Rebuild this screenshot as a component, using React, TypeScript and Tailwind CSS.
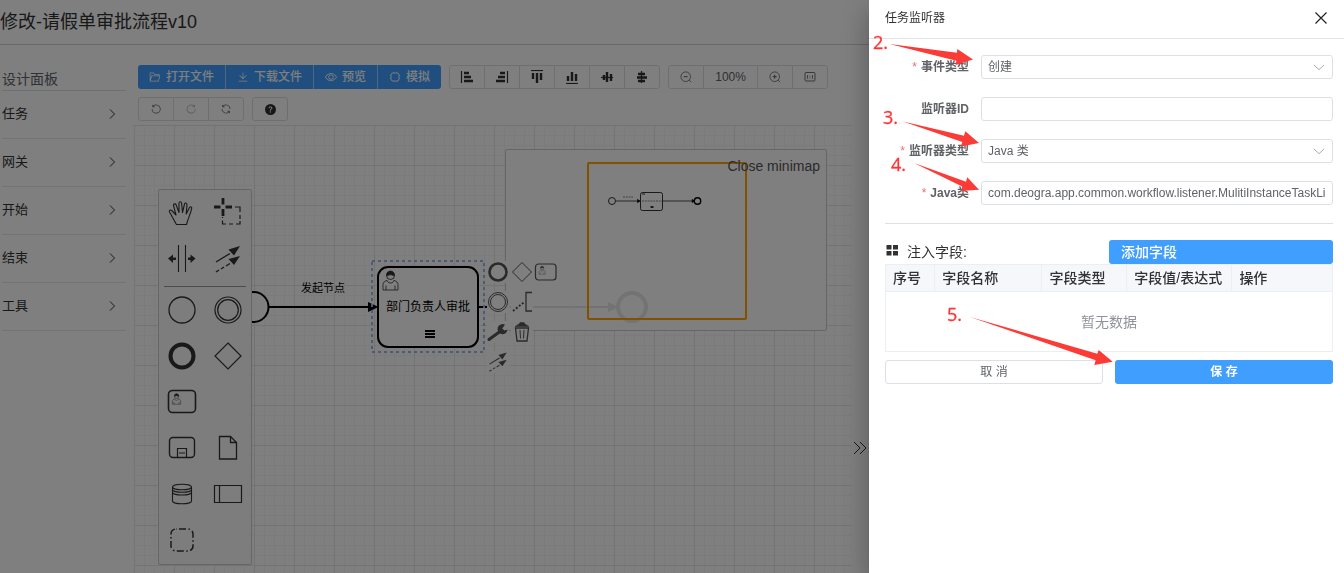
import React from 'react';
import { BsQuestionCircleFill } from 'react-icons/bs';

type IconProps = { className?: string };

const Glyph = ({ d, className = 'size-3' }: { d: string; className?: string }) => (
  <svg viewBox="0 0 1024 1024" fill="currentColor" aria-hidden="true" className={className}>
    <path d={d} />
  </svg>
);

const FOLDER =
  'M878.08 448H241.92l-96 384h636.16l96-384zM832 384v-64H485.76L357.504 192H128v448l57.92-231.744A32 32 0 0 1 216.96 384H832zm-24.96 512H96a32 32 0 0 1-32-32V160a32 32 0 0 1 32-32h287.872l128.384 128H864a32 32 0 0 1 32 32v96h23.04a32 32 0 0 1 31.04 39.744l-112 448A32 32 0 0 1 807.04 896z';
const DOWNLOAD =
  'M160 832h704a32 32 0 1 1 0 64H160a32 32 0 1 1 0-64zm384-253.696 236.288-236.352 45.248 45.248L508.8 704 192 387.2l45.248-45.248L480 584.704V128h64v450.304z';
const VIEW =
  'M512 160c320 0 512 352 512 352S832 864 512 864 0 512 0 512s192-352 512-352zm0 64c-225.28 0-384.128 208.064-436.8 288 52.608 79.872 211.456 288 436.8 288 225.28 0 384.128-208.064 436.8-288-52.608-79.872-211.456-288-436.8-288zm0 64a224 224 0 1 1 0 448 224 224 0 0 1 0-448zm0 64a160.192 160.192 0 0 0-160 160c0 88.192 71.744 160 160 160s160-71.808 160-160-71.744-160-160-160z';
const UNDO =
  'M289.088 296.704h92.992a32 32 0 0 1 0 64H232.96a32 32 0 0 1-32-32V179.712a32 32 0 0 1 64 0v50.56a384 384 0 0 1 643.84 282.88 384 384 0 0 1-383.936 384 384 384 0 0 1-384-384h64a320 320 0 1 0 640 0 320 320 0 0 0-555.712-216.448z';
const REDO =
  'M784.512 230.272v-50.56a32 32 0 1 1 64 0v149.056a32 32 0 0 1-32 32H667.52a32 32 0 1 1 0-64h92.992A320 320 0 1 0 524.8 833.152a320 320 0 0 0 320-320h64a384 384 0 0 1-384 384 384 384 0 0 1-384-384 384 384 0 0 1 643.712-282.88z';
const REFRESH =
  'M771.776 794.88A384 384 0 0 1 128 512h64a320 320 0 0 0 555.712 216.448H654.72a32 32 0 1 1 0-64h149.056a32 32 0 0 1 32 32v148.928a32 32 0 1 1-64 0v-50.56zM276.288 295.616h92.992a32 32 0 0 1 0 64H220.16a32 32 0 0 1-32-32V178.56a32 32 0 0 1 64 0v50.56A384 384 0 0 1 896.128 512h-64a320 320 0 0 0-555.776-216.384z';

const ChipIcon = () => (
  <svg viewBox="0 0 12 12" fill="none" stroke="currentColor" strokeWidth="0.9" aria-hidden="true" className="size-3">
    <rect x="2" y="2" width="8" height="8" rx="2" />
    <path d="M4.5 2V.8M7.5 2V.8M4.5 11.2V10M7.5 11.2V10M2 4.5H.8M2 7.5H.8M11.2 4.5H10M11.2 7.5H10" strokeWidth="0.6" />
  </svg>
);

const ChevronRight = ({ className = 'size-3' }: IconProps) => (
  <svg viewBox="0 0 12 12" fill="none" stroke="currentColor" aria-hidden="true" className={className}>
    <path d="M4 1.5 8.5 6 4 10.5" />
  </svg>
);

const ChevronDown = ({ className }: IconProps) => (
  <svg viewBox="0 0 12 12" fill="none" stroke="currentColor" aria-hidden="true" className={className}>
    <path d="M1 4 6 8.7 11 4" />
  </svg>
);

const ZoomIcon = ({ plus }: { plus?: boolean }) => (
  <svg viewBox="0 0 12 12" fill="none" stroke="currentColor" strokeWidth="0.8" aria-hidden="true" className="size-3">
    <circle cx="5.7" cy="5.7" r="4.8" />
    <path d="M9.2 9.2l2 2" />
    <path d="M3.7 5.7h4" strokeWidth="1" />
    {plus && <path d="M5.7 3.7v4" strokeWidth="1" />}
  </svg>
);

const FitIcon = () => (
  <svg viewBox="0 0 12 12" fill="none" stroke="currentColor" strokeWidth="0.9" aria-hidden="true" className="size-3">
    <rect x="1" y="1.5" width="10" height="8.5" rx="1" />
    <path d="M3.5 4v3.8M8.5 4v3.8M6 4.8v.8M6 6.6v.8" strokeWidth="0.8" />
  </svg>
);

const AlignIcon = ({ d, line }: { d: string; line: string }) => (
  <svg viewBox="0 0 14 14" fill="none" stroke="#303133" aria-hidden="true" className="size-3.5">
    <path d={d} strokeWidth="2.4" />
    <path d={line} strokeWidth="1.2" />
  </svg>
);

const ALIGNS = [
  { label: '向左对齐', d: 'M4 3h5M4 7h7M4 11h9', line: 'M1.5 1v12' },
  { label: '向右对齐', d: 'M5 3h5M3 7h7M1 11h9', line: 'M12.5 1v12' },
  { label: '向上对齐', d: 'M3 3v6M7 3v10M11 3v7', line: 'M1 .5h12' },
  { label: '向下对齐', d: 'M3 11V6M7 11V2M11 11V4', line: 'M1 13.5h12' },
  { label: '水平居中', d: 'M4 5v5M7 2v10M11 4v7', line: 'M1 7.5h12' },
  { label: '垂直居中', d: 'M3 4h7M2 7.5h10M3 11h7', line: 'M6.5 1v12' },
];

const primary =
  'flex h-6 items-center gap-[5px] border-r border-[#9fceff] bg-[#409eff] px-[11px] text-xs font-medium text-white first:rounded-l-[3px] last:rounded-r-[3px] last:border-r-0';
const plain =
  'flex h-6 min-w-9 items-center justify-center border border-[#dcdfe6] px-2.5 text-xs text-[#606266] not-first:-ml-px first:rounded-l-[3px] last:rounded-r-[3px]';

function Toolbar() {
  return (
    <div className="flex flex-col gap-2 px-1 pt-5 pb-1">
      <div className="flex gap-2">
        <div className="flex">
          <button className={primary}><Glyph d={FOLDER} />打开文件</button>
          <button className={primary}><Glyph d={DOWNLOAD} />下载文件</button>
          <button className={primary}><Glyph d={VIEW} />预览</button>
          <button className={primary}><ChipIcon />模拟</button>
        </div>
        <div className="flex">
          {ALIGNS.map((a) => (
            <button key={a.label} aria-label={a.label} className={plain}>
              <AlignIcon d={a.d} line={a.line} />
            </button>
          ))}
        </div>
        <div className="flex">
          <button aria-label="缩小" className={plain}><ZoomIcon /></button>
          <button className={plain + ' w-[55px]'}>100%</button>
          <button aria-label="放大" className={plain}><ZoomIcon plus /></button>
          <button aria-label="重置" className={plain}><FitIcon /></button>
        </div>
      </div>
      <div className="flex gap-2">
        <div className="flex">
          <button aria-label="撤销" className={plain}><Glyph d={UNDO} /></button>
          <button aria-label="恢复" className={plain}><Glyph d={REDO} className="size-3 opacity-50" /></button>
          <button aria-label="重新绘制" className={plain}><Glyph d={REFRESH} /></button>
        </div>
        <div className="flex">
          <button aria-label="帮助" className={plain}><BsQuestionCircleFill className="size-[11px] text-[#303133]" /></button>
        </div>
      </div>
    </div>
  );
}

const person = (
  <g fill="none" stroke="currentColor">
    <path d="M3.5 19.5V14c0-2 1.500-3.200 4-4.200 0 1.200 1.500 2.700 3.500 2.700s3.500-1.500 3.500-2.700c2.500 1 4 2.200 4 4.200v5.500zM6.500 15v4.500M15.500 15v4.500" strokeWidth="0.8" />
    <circle cx="11" cy="5" r="4" strokeWidth="0.9" />
    <path d="M7 5c0-2.600 1.700-4.500 4-4.500s4 1.900 4 4.500c-1.500.4-2.600-.7-4-.7S8.500 5.400 7 5z" fill="currentColor" strokeWidth="0.6" />
  </g>
);

const arrows = (
  <g>
    <path d="M2 14 16 5.500M2 24l3-2M7 21l3-2M12 18l4-2.500" fill="none" stroke="currentColor" strokeWidth="1.4" />
    <path d="M26-2 20 7.500 14.500 1.500zM26 8l-6 9-5.500-6z" fill="currentColor" />
  </g>
);

const PALETTE: { label: string; art: React.ReactNode }[] = [
  {
    label: '手型工具',
    art: (
      <path d="M9.500 26.500c-2-3-4-7.500-7-12.500-.7-1.600.9-2.600 2.200-1.500l4.300 4.500L6.500 7.500c-.3-1.800 1.900-2.300 2.600-.7L12 14.500V5c.1-1.700 2.400-1.700 2.600 0l.9 9.500 2-8.500c.5-1.500 2.600-1.200 2.500.5l-.8 9.500 3.300-6.500c.9-1.300 2.600-.6 2.200.9-1 5-3.500 9.500-5.200 16.100z" fill="none" stroke="currentColor" strokeWidth="1.100" strokeLinejoin="round" />
    ),
  },
  {
    label: '框选工具',
    art: (
      <g fill="none" stroke="currentColor">
        <path d="M10 0v6.500M10 11v7M1 9h6.500M12.500 9H19" strokeWidth="2.800" />
        <path d="M22 9h5v5M27 17v4M27 23v3h-4M20 26h-4M13 26H9.500v-3.500M9.500 20v-1" strokeWidth="1.200" />
      </g>
    ),
  },
  {
    label: '空间工具',
    art: (
      <g>
        <path d="M11.500 1v27M18.500 1v27" stroke="currentColor" strokeWidth="1.100" />
        <path d="M1 14.500 6 10.500v3h3v2.500H6v3zM28.500 14.500l-5-4v3h-2.500v2.500h2.500v3z" fill="currentColor" />
      </g>
    ),
  },
  { label: '连接工具', art: <g transform="translate(1,4)">{arrows}</g> },
  { label: '开始事件', art: <circle cx="15" cy="15" r="13" fill="none" stroke="currentColor" strokeWidth="1.300" /> },
  {
    label: '中间事件',
    art: (
      <g fill="none" stroke="currentColor" strokeWidth="1.200">
        <circle cx="15" cy="15" r="13" />
        <circle cx="15" cy="15" r="10.300" />
      </g>
    ),
  },
  { label: '结束事件', art: <circle cx="15" cy="15" r="11.500" fill="none" stroke="currentColor" strokeWidth="4" /> },
  { label: '网关', art: <path d="M15 2 28 15 15 28 2 15z" fill="none" stroke="currentColor" strokeWidth="1.200" /> },
  {
    label: '用户任务',
    art: (
      <g>
        <rect x="1.500" y="3.500" width="27" height="22" rx="4" fill="none" stroke="currentColor" strokeWidth="1.600" />
        <g transform="translate(3.500,6.500) scale(.55)">{person}</g>
      </g>
    ),
  },
  { label: '', art: null },
  {
    label: '子流程',
    art: (
      <g fill="none" stroke="currentColor" strokeWidth="1.200">
        <rect x="2.500" y="4.500" width="25" height="20" rx="3.500" strokeWidth="1.400" />
        <path d="M10.500 24.500v-9h9v9M12 20h6" />
      </g>
    ),
  },
  { label: '数据对象', art: <path d="M6.500 3.500h11l6 6V26h-17zM17.500 3.500v6h6" fill="none" stroke="currentColor" strokeWidth="1.300" /> },
  {
    label: '数据存储',
    art: (
      <g fill="none" stroke="currentColor" strokeWidth="1.100">
        <ellipse cx="15" cy="8" rx="9.500" ry="2.800" />
        <path d="M5.500 8v14c0 1.600 4.300 2.800 9.500 2.800s9.500-1.200 9.500-2.800V8M5.500 10.500c0 1.600 4.300 2.800 9.500 2.800s9.500-1.200 9.500-2.800M5.500 13.200c0 1.600 4.300 2.800 9.500 2.800s9.500-1.200 9.500-2.800" />
      </g>
    ),
  },
  { label: '泳池', art: <path d="M1.500 6.500h27v17h-27zM6.500 6.500v17" fill="none" stroke="currentColor" strokeWidth="1.200" /> },
  {
    label: '分组',
    art: (
      <rect x="4" y="4" width="22" height="22" rx="5" fill="none" stroke="currentColor" strokeWidth="1.500" strokeDasharray="7 2.500 1.500 2.500" strokeDashoffset="-3" />
    ),
  },
];

function PaletteGroup({ items }: { items: typeof PALETTE }) {
  return (
    <div className="grid grid-cols-[46px_46px]">
      {items.map((item, i) =>
        item.label ? (
          <button key={item.label} aria-label={item.label} className="flex h-[46px] items-center justify-center">
            <svg viewBox="0 0 30 30" className="size-[30px] overflow-visible">{item.art}</svg>
          </button>
        ) : (
          <span key={i} />
        )
      )}
    </div>
  );
}

const PAD: { label: string; x: number; y: number; art: React.ReactNode }[] = [
  { label: '追加结束事件', x: 488, y: 262, art: <circle cx="10" cy="10" r="8.500" fill="none" stroke="currentColor" strokeWidth="2.600" /> },
  { label: '追加网关', x: 512, y: 262, art: <path d="M10 .5 19.500 10 10 19.500.5 10z" fill="none" stroke="currentColor" /> },
  {
    label: '追加用户任务',
    x: 536,
    y: 262,
    art: (
      <g>
        <rect x="-.5" y="2" width="20.500" height="16" rx="3" fill="none" stroke="currentColor" strokeWidth="1.200" />
        <g transform="translate(1.500,4) scale(.42)">{person}</g>
      </g>
    ),
  },
  {
    label: '追加中间事件',
    x: 488,
    y: 292,
    art: (
      <g fill="none" stroke="currentColor">
        <circle cx="10" cy="10" r="9.500" />
        <circle cx="10" cy="10" r="7.500" />
      </g>
    ),
  },
  {
    label: '添加注释',
    x: 512,
    y: 292,
    art: (
      <g fill="none" stroke="currentColor">
        <path d="M20 .5h-6v18.500h6" strokeWidth="1.300" />
        <path d="M1 19 13 9.500" strokeWidth="2" strokeDasharray="2 1.800" />
      </g>
    ),
  },
  {
    label: '更改类型',
    x: 488,
    y: 322,
    art: (
      <g>
        <path d="M1 17.500 12 9.500" stroke="currentColor" strokeWidth="3" strokeLinecap="round" />
        <path d="M17 2.800a5 5 0 1 0 2.500 4.700l-3 1-2.300-2z" fill="currentColor" />
      </g>
    ),
  },
  {
    label: '删除',
    x: 512,
    y: 322,
    art: (
      <g fill="none" stroke="currentColor">
        <path d="M3.500 6h13l-1.500 13H5z" strokeWidth="1.300" />
        <path d="M8 8l.5 8.500M12 8l-.5 8.500" />
        <path d="M3 4.500 7 2l1-1.500h4L13 2l4 2.500z" fill="currentColor" strokeWidth=".5" />
      </g>
    ),
  },
  { label: '连接', x: 488, y: 352, art: <g transform="translate(0,2) scale(.72)">{arrows}</g> },
];

function Canvas() {
  return (
    <div className="relative min-h-0 flex-1 overflow-hidden">
      <svg className="absolute inset-0 size-full">
        <defs>
          <pattern id="minor" width="10" height="10" patternUnits="userSpaceOnUse">
            <path d="M.5 0v10M0 .5h10" stroke="#f6f6f6" fill="none" />
          </pattern>
          <pattern id="major" width="40" height="40" patternUnits="userSpaceOnUse">
            <rect width="40" height="40" fill="url(#minor)" />
            <path d="M.5 0v40M0 .5h40" stroke="#e6e6e6" fill="none" />
          </pattern>
        </defs>
        <rect width="100%" height="100%" fill="url(#major)" />
        <g transform="translate(-134,-125)" stroke="#000" strokeWidth="2" fill="none">
          <circle cx="253.500" cy="307" r="15" fill="#fff" />
          <path d="M269 307h100M479 307h130" />
          <path d="M368 302l10.500 5-10.500 5zM608 302l10.500 5-10.500 5z" fill="#000" stroke="none" />
          <circle cx="632" cy="307" r="14" strokeWidth="4" />
          <rect x="378" y="267" width="100" height="80" rx="10" fill="#fff" />
          <g transform="translate(379.500,270.500)" strokeWidth="1">{person}</g>
          <path d="M425 331h10M425 334h10M425 337h10" />
          <rect x="372" y="261" width="112" height="91" stroke="#98b8f0" strokeDasharray="3 3" />
          <g fill="#000" stroke="none" textAnchor="middle" className="font-['Noto_Sans_CJK_SC',sans-serif]">
            <text x="323" y="292" fontSize="11">发起节点</text>
            <text x="428" y="311" fontSize="12">部门负责人审批</text>
          </g>
        </g>
      </svg>

      <div className="absolute top-6 right-6 h-[182px] w-[322px] rounded-xs border border-[#ccc] bg-white/90">
        <svg viewBox="506 150 320 180" className="size-full" fill="none" stroke="#000">
          <circle cx="612" cy="201" r="3.500" strokeWidth=".8" />
          <path d="M616 201h24M663 201h31" strokeWidth=".7" />
          <path d="M637.500 199.300 640 201l-2.500 1.700zM692 199.300l2.500 1.700-2.500 1.700z" fill="#000" strokeWidth=".5" />
          <rect x="640.500" y="192.500" width="22" height="18" rx="2" strokeWidth=".8" />
          <path d="M642 194h3M650.500 207.500h3M650.500 206.500h3" strokeWidth=".8" />
          <path d="M642 201h20M623 197h10" stroke="#888" strokeDasharray="2 .8" strokeWidth="1.200" />
          <circle cx="697.500" cy="201" r="3.200" strokeWidth="1.400" />
          <rect x="588" y="163" width="158" height="156" rx="1" stroke="#ffa500" strokeWidth="2" />
        </svg>
        <button className="absolute top-1.5 right-1.5 text-sm text-[#555]">Close minimap</button>
      </div>

      <div className="absolute top-16 left-6 w-[94px] rounded-xs border border-[#ccc] bg-[#fafafa] pb-px text-[#333]">
        <PaletteGroup items={PALETTE.slice(0, 4)} />
        <hr className="mx-[5px] mt-1 border-[#999]" />
        <PaletteGroup items={PALETTE.slice(4)} />
      </div>

      {PAD.map((p) => (
        <button
          key={p.label}
          aria-label={p.label}
          style={{ left: p.x - 135, top: p.y - 126 }}
          className="absolute flex size-[22px] items-center justify-center bg-white text-[#555]"
        >
          <svg viewBox="0 0 20 20" className="size-5 overflow-visible">{p.art}</svg>
        </button>
      ))}
    </div>
  );
}

const input =
  "h-6 w-full min-w-0 appearance-none rounded-[3px] border border-[#dcdfe6] bg-white px-1.5 text-xs text-[#606266]";

function Field({ id, label, required, children }: { id: string; label: string; required?: boolean; children: React.ReactNode }) {
  return (
    <div className="grid grid-cols-[84px_1fr] items-center gap-3">
      <label htmlFor={id} className="text-right text-xs font-bold whitespace-nowrap text-[#606266]">
        {required && <span className="mr-1 font-normal text-[#f56c6c]">*</span>}
        {label}
      </label>
      <div className="relative flex">{children}</div>
    </div>
  );
}

const th = 'border border-[#ebeef5] px-[7px] py-0 leading-[26px] font-medium';

function Drawer() {
  return (
    <section
      role="dialog"
      aria-label="任务监听器"
      className="fixed inset-y-0 right-0 flex w-[475px] max-w-full flex-col bg-white shadow-[0_8px_10px_-5px_rgba(0,0,0,.2),0_16px_24px_2px_rgba(0,0,0,.14),0_6px_30px_5px_rgba(0,0,0,.12)]"
    >
      <header className="flex h-[39px] items-center justify-between border-b border-[#e4e4e4] px-4 pb-0.5">
        <h2 className="text-xs text-[#303133]">任务监听器</h2>
        <button aria-label="关闭" className="text-[#222]">
          <svg viewBox="0 0 14 14" fill="none" stroke="currentColor" strokeWidth="1.200" className="size-3.5">
            <path d="M1.500 1.500l11 11M12.500 1.500l-11 11" />
          </svg>
        </button>
      </header>
      <form className="flex flex-col pt-4 pr-[11px] pl-4" onSubmit={(e) => e.preventDefault()}>
        <div className="flex flex-col gap-[18px]">
          <Field id="event" label="事件类型" required>
            <select id="event" className={input}>
              <option>创建</option>
            </select>
            <ChevronDown className="pointer-events-none absolute top-1.5 right-2 size-3 text-[#a8abb2]" />
          </Field>
          <Field id="listener-id" label="监听器ID">
            <input id="listener-id" className={input} />
          </Field>
          <Field id="listener-type" label="监听器类型" required>
            <select id="listener-type" className={input}>
              <option>Java 类</option>
            </select>
            <ChevronDown className="pointer-events-none absolute top-1.5 right-2 size-3 text-[#a8abb2]" />
          </Field>
          <Field id="java-class" label="Java类" required>
            <input id="java-class" className={input} defaultValue="com.deogra.app.common.workflow.listener.MulitiInstanceTaskListener" />
          </Field>
        </div>
        <hr className="mt-[18px] mb-4 border-[#dcdfe6]" />
        <div className="grid grid-cols-2">
          <div className="flex h-6 items-center gap-2 text-sm text-[#303133]">
            <svg viewBox="0 0 14 14" fill="#303133" aria-hidden="true" className="mb-1 size-3.5">
              <path d="M1.500 2h5v4.500h-5zM8 2h5v4.500H8zM1.500 8h5v4.500h-5zM8 8h5v4.500H8z" />
            </svg>
            注入字段:
          </div>
          <button className="h-6 rounded-[3px] bg-[#409eff] px-3 text-left text-sm leading-6 font-medium text-white">添加字段</button>
        </div>
        <table className="w-full table-fixed border-collapse border border-[#ebeef5] text-sm">
          <thead>
            <tr className="bg-[#f5f7fa] text-left whitespace-nowrap text-[#303133]">
              <th className={th + ' w-[11%]'}>序号</th>
              <th className={th + ' w-[24%]'}>字段名称</th>
              <th className={th + ' w-[19%]'}>字段类型</th>
              <th className={th + ' w-[23.5%]'}>字段值/表达式</th>
              <th className={th}>操作</th>
            </tr>
          </thead>
          <tbody>
            <tr className="h-[60px]">
              <td colSpan={5} className="py-0 text-center text-[#909399]">暂无数据</td>
            </tr>
          </tbody>
        </table>
        <div className="mt-2 grid grid-cols-2 gap-3 text-xs">
          <button className="h-6 rounded-[3px] border border-[#dcdfe6] text-[#606266]">取 消</button>
          <button className="h-6 rounded-[3px] bg-[#409eff] font-bold text-white">保 存</button>
        </div>
      </form>
    </section>
  );
}

function Annotations() {
  return (
    <svg viewBox="0 0 475 573" aria-hidden="true" className="pointer-events-none fixed top-0 right-0 h-[573px] w-[475px] overflow-visible" fill="#fc3a36">
      <g transform="translate(-869,0)">
        <path d="M889.500 44 957 52.700 957.300 49 973 59.500 955.700 65 956.300 60.700z" />
        <path d="M903 121.500 964 135.700 965.300 131.300 979 143 961 146.500 962.300 142z" />
        <path d="M914 163 966 181.700 967.300 177.300 979 189.700 961 191 962.700 186.700z" />
        <path d="M970 317 1097.300 353.700 1098.700 350 1112.700 361.700 1094.300 365 1095.700 360.300z" />
        <g fontSize="18" fill="#ff3333" stroke="#ff3333" strokeWidth=".3" className="font-['Open_Sans',sans-serif]">
          <text x="873" y="49">2.</text>
          <text x="883" y="124">3.</text>
          <text x="891" y="171">4.</text>
          <text x="947" y="321">5.</text>
        </g>
      </g>
    </svg>
  );
}

export default function App() {
  return (
    <div className="font-['Liberation_Sans','Noto_Sans_CJK_SC',sans-serif]">
      <main className="flex h-screen flex-col overflow-hidden bg-white text-[#303133]">
        <h1 className="flex h-[45px] items-center border-b border-[#d0d3da] text-lg">修改-请假单审批流程v10</h1>
        <div className="flex min-h-0 flex-1">
          <nav className="w-[134px] shrink-0 pt-[22px] pr-2 pl-0.5">
            <h2 className="flex h-6 items-center border-b border-[#dcdfe6] text-sm text-[#606266]">设计面板</h2>
            {['任务', '网关', '开始', '结束', '工具'].map((name) => (
              <button key={name} className="flex h-12 w-full items-center justify-between border-b border-[#e4e7ed] pr-2 pb-0.5 text-[13px]">
                {name}
                <ChevronRight className="size-3" />
              </button>
            ))}
          </nav>
          <div className="flex min-w-0 flex-1 flex-col">
            <Toolbar />
            <Canvas />
          </div>
          <aside className="w-[493px] shrink-0 pt-[391px]">
            <button aria-label="收起" className="flex h-6 w-[18px] items-center justify-center text-[#333]">
              <svg viewBox="0 0 14 14" fill="none" stroke="currentColor" className="size-3.5">
                <path d="M1 1l6 6-6 6M7 1l6 6-6 6" />
              </svg>
            </button>
          </aside>
        </div>
      </main>
      <div className="fixed inset-0 bg-black/50" />
      <Drawer />
      <Annotations />
    </div>
  );
}
